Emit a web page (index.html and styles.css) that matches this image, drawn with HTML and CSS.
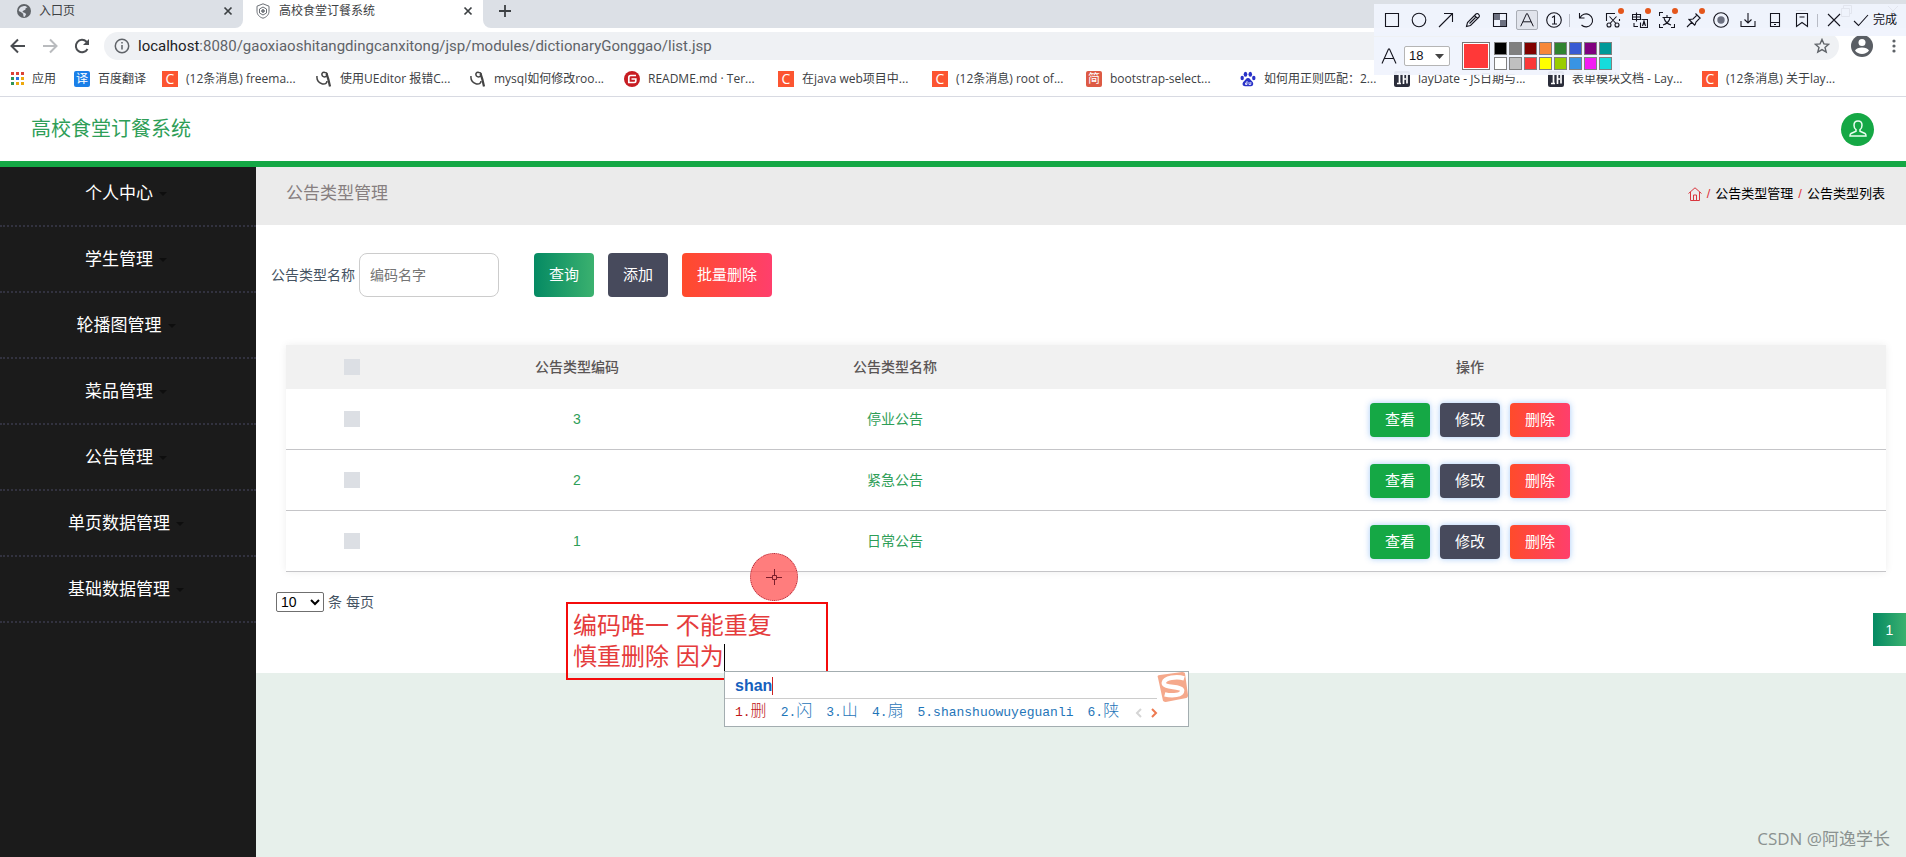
FILE: index.html
```html
<!DOCTYPE html>
<html lang="zh-CN">
<head>
<meta charset="utf-8">
<title>高校食堂订餐系统</title>
<link rel="stylesheet" href="styles.css">
</head>
<body>
<div class="browser">
  <div class="tabs">
    <div class="tab tab-idle">
      <svg class="i14" viewBox="0 0 16 16"><circle cx="8" cy="8" r="8" fill="#5f6368"/><path d="M7 2.500c2-.8 4 .2 5 1.500l-2 .5-.5 2-2 1-1.500 1.500 2.500 1 2 1.500-1.500 3H7.500L7 11 4.500 9 2 8c0-3 2-5 5-5.500z" fill="#dce0e8"/></svg>
      <span class="tab-title">入口页</span>
      <button class="close" aria-label="关闭"><svg class="i10" viewBox="0 0 10 10"><path d="M1.500 1.500l7 7M8.500 1.500l-7 7" stroke="#3c4043" stroke-width="1.700"/></svg></button>
    </div>
    <div class="tab tab-active">
      <svg class="i16" viewBox="0 0 16 16" fill="none" stroke="#6b6f75"><path d="M8 .8l6 2.400v5c0 3.500-2.500 6-6 7-3.500-1-6-3.500-6-7v-5z"/><path d="M8 4l3.500 2v4L8 12 4.500 10V6z"/><path d="M8 6v4M6 8h4" stroke-width="1.500"/></svg>
      <span class="tab-title">高校食堂订餐系统</span>
      <button class="close" aria-label="关闭"><svg class="i10" viewBox="0 0 10 10"><path d="M1.500 1.500l7 7M8.500 1.500l-7 7" stroke="#3c4043" stroke-width="1.700"/></svg></button>
    </div>
    <div class="strip">
      <button class="close" aria-label="新标签页"><svg class="i12" viewBox="0 0 12 12"><path d="M6 0v12M0 6h12" stroke="#3c4043" stroke-width="1.800"/></svg></button>
      <div class="win">
        <svg class="i12" viewBox="0 0 12 12"><path d="M1 5.500h10" stroke="#000"/></svg>
        <svg class="i12" viewBox="0 0 12 12" fill="none" stroke="#000"><path d="M.5 3.500h8v8h-8zM2.500 3.500V.500h8v8h-2"/></svg>
        <svg class="i12" viewBox="0 0 12 12"><path d="M1 1l10 10M11 1L1 11" stroke="#000"/></svg>
      </div>
    </div>
  </div>

  <div class="bar">
    <button class="nav" aria-label="后退"><svg class="i16" viewBox="0 0 16 16" fill="none" stroke="#4a4d51" stroke-width="2"><path d="M15 8H2M8 1.500L1.500 8 8 14.500"/></svg></button>
    <button class="nav" aria-label="前进"><svg class="i16" viewBox="0 0 16 16" fill="none" stroke="#b9bbbe" stroke-width="2"><path d="M1 8h13M8 1.500L14.500 8 8 14.500"/></svg></button>
    <button class="nav" aria-label="刷新"><svg class="i16" viewBox="0 0 16 16"><path d="M13.500 11A6.200 6.200 0 1 1 12.500 3.700L14 5.500" fill="none" stroke="#4a4d51" stroke-width="2"/><path d="M15 1v6H9z" fill="#4a4d51"/></svg></button>
    <div class="omni">
      <svg class="i16" viewBox="0 0 16 16" fill="none" stroke="#5f6368" stroke-width="1.500"><circle cx="8" cy="8" r="6.700"/><path d="M8 7v4.500M8 4v1.600"/></svg>
      <span class="url"><b>localhost</b>:8080/gaoxiaoshitangdingcanxitong/jsp/modules/dictionaryGonggao/list.jsp</span>
      <svg class="i16" viewBox="0 0 16 16" fill="none" stroke="#5f6368" stroke-width="1.400"><path d="M8 1.500l1.900 4.400 4.800.4-3.700 3.100 1.200 4.700L8 11.600l-4.200 2.500L5 9.400 1.300 6.300l4.800-.4z"/></svg>
    </div>
    <svg class="i22" viewBox="0 0 22 22"><circle cx="11" cy="11" r="11" fill="#5a5e64"/><circle cx="11" cy="7.500" r="3.500" fill="#fff"/><path d="M4 15.500c2-4 12-4 14 0-3 4.500-11 4.500-14 0z" fill="#fff"/></svg>
    <svg class="dots" viewBox="0 0 4 14" fill="#5f6368"><circle cx="2" cy="2" r="1.600"/><circle cx="2" cy="7" r="1.600"/><circle cx="2" cy="12" r="1.600"/></svg>
  </div>

  <div class="marks">
    <a class="mark mark-apps" href="#"><svg class="i14" viewBox="0 0 14 14"><path d="M1 0h3v3H1zM6 0h3v3H6zM11 0h3v3h-3z" fill="#db4437"/><path d="M1 5h3v3H1z" fill="#2f9457"/><path d="M6 5h3v3H6z" fill="#2a73e0"/><path d="M11 5h3v3h-3zM6 10h3v3H6zM11 10h3v3h-3z" fill="#eda90e"/><path d="M1 10h3v3H1z" fill="#2f9457"/></svg><span>应用</span></a>
    <a class="mark mark-fanyi" href="#"><i class="fav fav-blue">译</i><span>百度翻译</span></a>
    <a class="mark" href="#"><i class="fav fav-c">C</i><span>(12条消息) freema...</span></a>
    <a class="mark" href="#"><svg class="i16" viewBox="0 0 16 16" fill="none" stroke="#444"><path d="M1 5c-.5 4 2 7 5.500 8 3 .5 4.500-1 4.500-3" stroke-width="1.500"/><path d="M9 1.500C6.500.5 5 3 6.500 5c1.500 1.600 4.500 1 4.500-1.500C11 2 10 1.500 9 1.500z" stroke-width="1.500"/><path d="M10.500 2.500c1.500 4 2.500 8 3.500 13" stroke-width="2.200"/></svg><span>使用UEditor 报错C...</span></a>
    <a class="mark" href="#"><svg class="i16" viewBox="0 0 16 16" fill="none" stroke="#444"><path d="M1 5c-.5 4 2 7 5.500 8 3 .5 4.500-1 4.500-3" stroke-width="1.500"/><path d="M9 1.500C6.500.5 5 3 6.500 5c1.500 1.600 4.500 1 4.500-1.500C11 2 10 1.500 9 1.500z" stroke-width="1.500"/><path d="M10.500 2.500c1.500 4 2.500 8 3.500 13" stroke-width="2.200"/></svg><span>mysql如何修改roo...</span></a>
    <a class="mark" href="#"><svg class="i16" viewBox="0 0 16 16"><circle cx="8" cy="8" r="8" fill="#c71d23"/><path d="M12 4.500H6.800c-1.300 0-2 .8-2 2v5h5.500c1 0 1.500-.6 1.500-1.500V8H7.500" fill="none" stroke="#fff" stroke-width="1.700"/></svg><span>README.md · Ter...</span></a>
    <a class="mark" href="#"><i class="fav fav-c">C</i><span>在java web项目中...</span></a>
    <a class="mark" href="#"><i class="fav fav-c">C</i><span>(12条消息) root of...</span></a>
    <a class="mark" href="#"><i class="fav fav-jian">简</i><span>bootstrap-select...</span></a>
    <a class="mark" href="#"><svg class="i16" viewBox="0 0 16 16" fill="#2932c8"><ellipse cx="5.500" cy="3.300" rx="1.800" ry="2.500"/><ellipse cx="10.300" cy="3.300" rx="1.800" ry="2.500"/><ellipse cx="2.200" cy="7" rx="1.700" ry="2.200"/><ellipse cx="13.800" cy="7" rx="1.700" ry="2.200"/><path d="M8 7c2 0 2.500 2 4 3.300 2 1.700 1.500 5-1 5-1.500 0-4.500-.2-6 0-2.500 0-3.500-3-1-5C5.500 9 6 7 8 7z"/><path d="M7 10v3.500H5.500V12H7M9 11v2.500h1.800V11" fill="none" stroke="#fff" stroke-width=".8"/></svg><span>如何用正则匹配：2...</span></a>
    <a class="mark" href="#"><svg class="i16" viewBox="0 0 16 16"><rect width="16" height="16" rx="2" fill="#2b2d3a"/><path d="M3 3h2.500v9M3 12.500h4M8.500 3H13v9.500M9.500 13V4M9 8h3" fill="none" stroke="#fff" stroke-width="1.700"/></svg><span>layDate - JS日期与...</span></a>
    <a class="mark" href="#"><svg class="i16" viewBox="0 0 16 16"><rect width="16" height="16" rx="2" fill="#2b2d3a"/><path d="M3 3h2.500v9M3 12.500h4M8.500 3H13v9.500M9.500 13V4M9 8h3" fill="none" stroke="#fff" stroke-width="1.700"/></svg><span>表单模块文档 - Lay...</span></a>
    <a class="mark" href="#"><i class="fav fav-c">C</i><span>(12条消息) 关于lay...</span></a>
  </div>
</div>

<header class="site">
  <h1 class="brand">高校食堂订餐系统</h1>
  <button class="avatar" aria-label="用户"><svg class="i22" viewBox="0 0 22 22" fill="none" stroke="#e9fff0" stroke-width="1.500"><path d="M11 3c-2.600 0-4 1.800-4 4.200 0 2 .8 3.600 2 4.500v1.600l-5 2.200c-.8.400-1 1-1 2.500h16c0-1.500-.2-2.100-1-2.500l-5-2.200v-1.600c1.200-.9 2-2.500 2-4.500C15 4.800 13.600 3 11 3z"/></svg></button>
</header>

<div class="layout">
  <nav class="side">
    <a class="side-item" href="#">个人中心</a>
    <a class="side-item" href="#">学生管理</a>
    <a class="side-item" href="#">轮播图管理</a>
    <a class="side-item" href="#">菜品管理</a>
    <a class="side-item" href="#">公告管理</a>
    <a class="side-item" href="#">单页数据管理</a>
    <a class="side-item" href="#">基础数据管理</a>
  </nav>
  <main class="main">
    <div class="crumbs">
      <h2 class="crumb-title">公告类型管理</h2>
      <div class="crumb-path">
        <svg class="i14" viewBox="0 0 14 14" fill="none" stroke="#d9363e"><path d="M.5 6.500L7 .8l6.500 5.700M2.500 5v8.500h9V5M5.500 13.500V8h3v5.500"/></svg>
        <span class="slash">/</span><a href="#">公告类型管理</a><span class="slash">/</span><a href="#">公告类型列表</a>
      </div>
    </div>
    <section class="panel">
      <form class="search">
        <label for="name">公告类型名称</label>
        <input class="field" id="name" type="text" placeholder="编码名字">
        <button class="btn btn-query" type="button">查询</button>
        <button class="btn btn-dark" type="button">添加</button>
        <button class="btn btn-red" type="button">批量删除</button>
      </form>
      <table class="grid">
        <colgroup><col class="col-check"><col class="col-data"><col class="col-data"><col></colgroup>
        <thead><tr><th><input class="check" type="checkbox" aria-label="全选"></th><th>公告类型编码</th><th>公告类型名称</th><th>操作</th></tr></thead>
        <tbody>
          <tr><td><input class="check" type="checkbox" aria-label="选择 3"></td><td>3</td><td>停业公告</td><td><div class="acts"><button class="act btn-green">查看</button><button class="act btn-dark">修改</button><button class="act btn-red">删除</button></div></td></tr>
          <tr><td><input class="check" type="checkbox" aria-label="选择 2"></td><td>2</td><td>紧急公告</td><td><div class="acts"><button class="act btn-green">查看</button><button class="act btn-dark">修改</button><button class="act btn-red">删除</button></div></td></tr>
          <tr><td><input class="check" type="checkbox" aria-label="选择 1"></td><td>1</td><td>日常公告</td><td><div class="acts"><button class="act btn-green">查看</button><button class="act btn-dark">修改</button><button class="act btn-red">删除</button></div></td></tr>
        </tbody>
      </table>
      <div class="size"><select class="size-select" id="size"><option>10</option></select><label for="size">条 每页</label></div>
      <div class="pager"><button class="page">1</button></div>
    </section>
  </main>
</div>

<div class="note">编码唯一 不能重复<br>慎重删除 因为<span class="caret"></span></div>
<div class="cursor"><svg class="i16" viewBox="0 0 16 16" fill="none" stroke="#7c1f2c"><path d="M8.500 0v6M8.500 11v5M0 8.500h6M11 8.500h5M6.500 6.500h4v4h-4z"/></svg></div>

<div class="ime">
  <div class="ime-top"><span class="ime-text">shan</span></div>
  <div class="ime-list">
    <span class="cand cand-first">1.<em>删</em></span><span class="cand">2.<em>闪</em></span><span class="cand">3.<em>山</em></span><span class="cand">4.<em>扇</em></span><span class="cand">5.shanshuowuyeguanli</span><span class="cand">6.<em>陕</em></span>
    <svg class="ime-arrows" viewBox="0 0 24 10" fill="none" stroke-width="2"><path d="M6 1L2 5l4 4" stroke="#d5d5d5"/><path d="M17 1l4 4-4 4" stroke="#ee7a50"/></svg>
  </div>
  <svg class="ime-logo" viewBox="0 0 32 32"><path d="M1 6C0 4 1 3 3 3L26 0c2 0 3 1 3 2l3 22c0 2-1 3-3 3L9 31c-2 0-3-1-3-2z" fill="#f5a98c"/><path d="M28 6.500C20 4 8 6 7 11c-1 6 18 3 19 8 0 5-10 6-18 4" fill="none" stroke="#fff" stroke-width="4.500"/></svg>
</div>

<div class="shot">
  <div class="shot-main">
    <button class="tool" aria-label="矩形"><svg class="i16" viewBox="0 0 16 16"><path d="M1.500 1.500h13v13h-13z"/></svg></button>
    <button class="tool" aria-label="椭圆"><svg class="i16" viewBox="0 0 16 16"><circle cx="8" cy="8" r="6.800"/></svg></button>
    <button class="tool" aria-label="箭头"><svg class="i16" viewBox="0 0 16 16"><path d="M1 15L14.500 1.500M6 1.500h8.500V10"/></svg></button>
    <button class="tool" aria-label="画笔"><svg class="i16" viewBox="0 0 16 16"><path d="M1.500 14.500l1-4L11 2c1.500-1.500 4.500 1.500 3 3l-8.500 8.500zM9.500 3.500l3 3M4.500 11.500l6-6"/></svg></button>
    <button class="tool" aria-label="马赛克"><svg class="i16" viewBox="0 0 16 16"><path d="M1.500 1.500h13v13h-13z"/><path d="M2 2h6v6H2zM8 8h6v6H8z" fill="#6c7080" stroke="none"/></svg></button>
    <button class="tool" aria-label="文字"><svg class="tool-on" viewBox="0 0 22 20"><path d="M4 17L10.500 3h1L18 17M6.500 12h9"/></svg></button>
    <button class="tool" aria-label="序号"><svg class="i16" viewBox="0 0 16 16"><circle cx="8" cy="8" r="7.300"/><path d="M6 5.500L8.500 4v8M6 12h5"/></svg></button>
    <i class="sep"></i>
    <button class="tool" aria-label="撤销"><svg class="i16" viewBox="0 0 16 16"><path d="M1.500 1v5h5M2 6a6.500 6.500 0 1 1 1.500 7"/></svg></button>
    <button class="tool hot" aria-label="剪裁"><svg class="i16" viewBox="0 0 16 16"><path d="M1.500 9V1.500H10M4.500 4.500l6.500 7M11.500 4.500l-6.500 7M14.500 7v2"/><circle cx="4" cy="13" r="2"/><circle cx="12" cy="13" r="2"/></svg></button>
    <button class="tool hot" aria-label="翻译"><svg class="i16" viewBox="0 0 16 16"><path d="M.5 2.500h8v5h-8zM4.500.5v9M.5 5h8M9.500 7.500h6v8h-7v-5M10.500 14l1.500-5 1.500 5M11 12h2M2 11v3.500h4"/></svg></button>
    <button class="tool hot" aria-label="识字"><svg class="i16" viewBox="0 0 16 16"><path d="M.5 4V.500H4M15.500 12v3.500H12M.5 12v3.500H4M3.500 5.500h9M8 3v2.500M5 6c1 4 4 6 7 7M11 6c-1 4-4 6-7 7"/></svg></button>
    <button class="tool hot" aria-label="钉住"><svg class="i16" viewBox="0 0 16 16"><path d="M1 15l5-5M2.500 7l6.500 6.500M3.500 7.500L7 7l4-4 3 3-4 4-1 3M9.500 1.500l5 5"/></svg></button>
    <button class="tool" aria-label="录制"><svg class="i16" viewBox="0 0 16 16"><circle cx="8" cy="8" r="7.300"/><circle cx="8" cy="8" r="3.700" fill="#6c7080" stroke="none"/></svg></button>
    <button class="tool" aria-label="下载"><svg class="i16" viewBox="0 0 16 16"><path d="M8 1v10M4.500 7.500L8 11l3.500-3.500M1 9v5.500h14V9"/></svg></button>
    <button class="tool" aria-label="手机"><svg class="i16" viewBox="0 0 16 16"><path d="M3.500 1.500h9v13h-9zM3.500 10.500h9M7 12.500h2"/></svg></button>
    <button class="tool" aria-label="收藏"><svg class="i16" viewBox="0 0 16 16"><path d="M2.500 1.500h11v13L8 10.500l-5.500 4zM5.500 5h5"/></svg></button>
    <i class="sep"></i>
    <button class="tool" aria-label="取消"><svg class="i16" viewBox="0 0 16 16"><path d="M2 2l12 12M14 2L2 14"/></svg></button>
    <button class="tool tool-done"><svg class="i16" viewBox="0 0 16 16"><path d="M1 9l4.500 4.500L15 3"/></svg>完成</button>
  </div>
  <div class="shot-sub">
    <svg class="i18" viewBox="0 0 18 18"><path d="M2 16.500L8.500 2h1L16 16.500M4.500 11.500h9"/></svg>
    <div class="font-box">
      <select class="font-select" aria-label="字号"><option>18</option></select>
      <svg class="font-arrow" viewBox="0 0 9 5"><path d="M0 0h9L4.500 5z"/></svg>
    </div>
    <i class="color-now"></i>
    <div class="colors">
      <i class="sw c1"></i><i class="sw c2"></i><i class="sw c3"></i><i class="sw c4"></i><i class="sw c5"></i><i class="sw c6"></i><i class="sw c7"></i><i class="sw c8"></i>
      <i class="sw c9"></i><i class="sw c10"></i><i class="sw c11"></i><i class="sw c12"></i><i class="sw c13"></i><i class="sw c14"></i><i class="sw c15"></i><i class="sw c16"></i>
    </div>
  </div>
</div>
<div class="mark-text">CSDN @阿逸学长</div>
</body>
</html>
```

FILE: styles.css
```css
* { box-sizing: border-box; }

body {
  margin: 0;
  min-height: 100vh;
  display: flex;
  flex-direction: column;
  position: relative;
  overflow-x: hidden;
  background: #e7f0eb;
  color: #455362;
  font: 14px/20px "Liberation Sans", "Noto Sans CJK SC", sans-serif;
}

button, input, select { font: inherit; color: inherit; margin: 0; }
button { border: 0; padding: 0; background: none; }
a { color: inherit; text-decoration: none; }
svg { display: block; flex: none; }
i, em { font-style: normal; }

.i10 { width: 10px; height: 10px; }
.i12 { width: 12px; height: 12px; }
.i14 { width: 14px; height: 14px; }
.i16 { width: 16px; height: 16px; }
.i18 { width: 18px; height: 18px; }
.i22 { width: 22px; height: 22px; }

/* Browser chrome */
.browser {
  background: #fff;
  border-bottom: 1px solid #d8dae2;
  font-family: "Open Sans", "Noto Sans CJK SC", sans-serif;
  color: #3c4043;
}
.tabs { display: flex; height: 28px; }
.tab {
  display: flex;
  align-items: center;
  width: 243px;
  gap: 8px;
  padding: 0 10px 6px 17px;
  font-size: 12px;
}
.tab-active { width: 240px; padding-left: 12px; }
.tab-idle, .strip { background: #dce0e6; }
.tab-idle { border-bottom-right-radius: 8px; }
.tab-title { flex: 1; }
.strip {
  flex: 1;
  display: flex;
  align-items: center;
  justify-content: space-between;
  padding: 0 7px 6px 16px;
  border-bottom-left-radius: 8px;
}
.win { display: flex; gap: 34px; }

.bar { display: flex; align-items: center; height: 36px; padding: 0 10px; }
.nav { width: 32px; }
.omni {
  flex: 1;
  display: flex;
  align-items: center;
  gap: 8px;
  height: 28px;
  margin: 0 12px 0 -2px;
  padding: 0 9px 0 10px;
  border-radius: 14px;
  background: #eff1f4;
}
.url { flex: 1; font-family: Roboto, sans-serif; font-size: 15px; color: #5f6368; }
.url b { font-weight: 400; color: #202124; }
.dots { width: 4px; height: 14px; margin: 0 0 0 19px; }

.marks { display: flex; height: 32px; padding: 0 0 2px 10px; font-size: 12px; }
.mark {
  display: flex;
  align-items: center;
  gap: 8px;
  width: 154px;
  flex: none;
  white-space: nowrap;
}
.mark-apps { width: 64px; }
.mark-fanyi { width: 88px; }
.fav {
  width: 16px;
  height: 16px;
  border-radius: 2px;
  color: #fff;
  font-size: 12px;
  line-height: 16px;
  text-align: center;
}
.fav-blue { background: #1a7fe8; }
.fav-c { background: #fc5531; border-radius: 0; font-size: 14px; }
.fav-jian { background: #dd5a44; }

/* Site header */
.site {
  position: relative;
  z-index: 1;
  display: flex;
  align-items: center;
  justify-content: space-between;
  height: 70px;
  padding: 0 32px 0 31px;
  background: #fff;
  border-bottom: 6px solid #15a845;
}
.brand { margin: 0; font-size: 20px; font-weight: 400; color: #2e9e57; }
.avatar {
  display: grid;
  place-items: center;
  width: 33px;
  height: 33px;
  border-radius: 50%;
  background: #15a845;
}

.layout { flex: 1; display: flex; }
.side { width: 256px; flex: none; margin-top: -6px; background: #1b1b1b; }
.side-item {
  display: flex;
  align-items: center;
  justify-content: center;
  gap: 6px;
  height: 66px;
  padding: 2px 4px 0 0;
  border-bottom: 2px dotted #32323f;
  color: #fff;
  font-size: 17px;
}
.side-item::after {
  content: "";
  border: 4px solid transparent;
  border-top-color: #0e0e0e;
  border-bottom: 0;
}

.main { flex: 1; min-width: 0; }
.crumbs {
  display: flex;
  align-items: center;
  justify-content: space-between;
  height: 58px;
  padding: 0 21px 5px 30px;
  background: #ebebeb;
}
.crumb-title { margin: 0; font-size: 17px; font-weight: 400; color: #877f80; }
.crumb-path { display: flex; align-items: center; gap: 5px; font-size: 13px; color: #000; }
.slash { color: #e0343c; }

.panel { background: #fff; padding: 28px 0 27px; }
.search { display: flex; align-items: center; padding-left: 15px; }
.field {
  width: 140px;
  height: 44px;
  margin: 0 35px 0 4px;
  padding: 0 10px;
  border: 1px solid #ccc;
  border-radius: 8px;
}
.field::placeholder { color: #757575; }
.btn {
  height: 44px;
  margin-right: 14px;
  padding: 0 15px;
  border-radius: 4px;
  color: #fff;
  font-size: 15px;
}
.btn-query, .page { background: linear-gradient(90deg, #058a63, #3bb16f); }
.btn-green { background: #15a845; }
.btn-dark { background: #474a5c; }
.btn-red { background: linear-gradient(90deg, #ff4b2b, #ff3f6c); }

.grid {
  width: calc(100% - 50px);
  margin: 48px 20px 20px 30px;
  border-collapse: separate;
  border-spacing: 0;
  table-layout: fixed;
  text-align: center;
  box-shadow: 0 0 8px rgba(0, 0, 0, .07);
}
.col-check { width: 132px; }
.col-data { width: 318px; }
.grid th { height: 44px; padding: 0; background: #f1f1f1; color: #5a5555; font-weight: 500; }
.grid td { height: 61px; padding: 0; border-bottom: 1px solid #c5c5c8; color: #2e9e57; }
.check { display: block; appearance: none; width: 16px; height: 16px; margin: 0 auto; background: #dcdfe4; }
.acts { display: flex; justify-content: center; gap: 10px; padding-top: 2px; }
.act {
  width: 60px;
  height: 34px;
  border-radius: 4px;
  color: #fff;
  font-size: 15px;
  box-shadow: 0 0 6px rgba(60, 140, 240, .45);
}

.size { display: flex; align-items: center; gap: 4px; padding-left: 20px; }
.size-select { width: 48px; height: 20px; border: 1px solid #6f6f6f; border-radius: 2px; background: #fff; color: #000; line-height: 16px; }
.pager { display: flex; justify-content: flex-end; margin-top: 1px; }
.page { width: 33px; height: 33px; color: #fff; }

/* Annotation over the page */
.note {
  position: absolute;
  left: 566px;
  top: 602px;
  width: 262px;
  height: 78px;
  padding: 6px 5px;
  border: 2px solid #f40b0b;
  color: #e53c3c;
  font-size: 24px;
  line-height: 31px;
}
.caret { display: inline-block; width: 1px; height: 30px; background: #000; vertical-align: middle; }
.cursor {
  position: absolute;
  left: 750px;
  top: 553px;
  display: grid;
  place-items: center;
  width: 48px;
  height: 48px;
  border: 1px dotted #a82030;
  border-radius: 50%;
  background: rgba(255, 80, 80, .74);
}

/* Input method popup */
.ime {
  position: absolute;
  left: 724px;
  top: 671px;
  width: 465px;
  height: 56px;
  border: 1px solid #a3adb0;
  background: #fff;
}
.ime-top { height: 27px; margin-right: 31px; padding: 4px 10px; border-bottom: 1px solid #ccc; }
.ime-text { display: inline-block; border-right: 1px solid #c22; color: #1560bd; font-size: 16px; font-weight: 700; line-height: 18px; }
.ime-list {
  display: flex;
  align-items: center;
  gap: 14px;
  height: 27px;
  padding-left: 10px;
  color: #1f75b8;
  font-family: "Liberation Mono", "Noto Sans CJK SC", monospace;
  font-size: 13px;
}
.cand em { font-size: 16px; font-weight: 300; }
.cand-first { color: #c01818; }
.ime-arrows { width: 24px; height: 10px; margin-left: 2px; }
.ime-logo { position: absolute; right: 0; top: 0; width: 31px; height: 31px; }

/* Capture toolbar */
.shot { position: absolute; right: 0; top: 4px; width: 532px; color: #101018; }
.shot svg { fill: none; stroke: #15151f; stroke-width: 1.1; }
.shot-main, .shot-sub { display: flex; align-items: center; background: rgba(240, 243, 253, .94); }
.shot-main { height: 32px; padding-left: 4px; }
.tool { position: relative; display: grid; place-items: center; width: 27px; height: 24px; flex: none; }
.shot .tool-on { width: 22px; height: 20px; border: 1px solid #a9adb5; border-radius: 2px; background: #e1e4ec; }
.tool-done { display: flex; align-items: center; gap: 4px; width: 54px; padding-left: 6px; font-size: 12px; white-space: nowrap; }
.hot::after {
  content: "";
  position: absolute;
  right: 2px;
  top: 0;
  width: 6px;
  height: 6px;
  border-radius: 50%;
  background: #e4561b;
}
.sep { width: 1px; height: 13px; margin: 0 2px; background: #b9bcc6; }
.shot-sub { width: 246px; height: 38px; margin-top: 1px; padding-left: 6px; }
.font-box { position: relative; margin: 0 12px 0 6px; }
.font-select {
  display: block;
  appearance: none;
  width: 46px;
  height: 20px;
  padding: 0 4px;
  border: 1px solid #b5b5b5;
  border-radius: 2px;
  background: #fff;
  font-size: 13px;
  line-height: 18px;
}
.shot .font-arrow { position: absolute; right: 6px; top: 8px; width: 9px; height: 5px; fill: #444; stroke: none; pointer-events: none; }
.color-now { width: 28px; height: 28px; margin-right: 4px; border: 1px solid #777; background: #ff3838; box-shadow: inset 0 0 0 1px #fff; }
.colors { display: grid; grid-template-columns: repeat(8, 13px); gap: 2px; }
.sw { height: 13px; border: 1px solid #808080; }
.c1 { background: #000; }
.c2 { background: #808080; }
.c3 { background: #800000; }
.c4 { background: #f78839; }
.c5 { background: #308430; }
.c6 { background: #385ad3; }
.c7 { background: #800080; }
.c8 { background: #009999; }
.c9 { background: #fff; }
.c10 { background: #c0c0c0; }
.c11 { background: #fb3838; }
.c12 { background: #ff0; }
.c13 { background: #9c0; }
.c14 { background: #3894e4; }
.c15 { background: #f31bf3; }
.c16 { background: #16dcdc; }

.mark-text { position: absolute; right: 16px; bottom: 6px; color: #8b9290; font-family: "Open Sans", "Noto Sans CJK SC", sans-serif; font-size: 17px; line-height: 24px; }
```
